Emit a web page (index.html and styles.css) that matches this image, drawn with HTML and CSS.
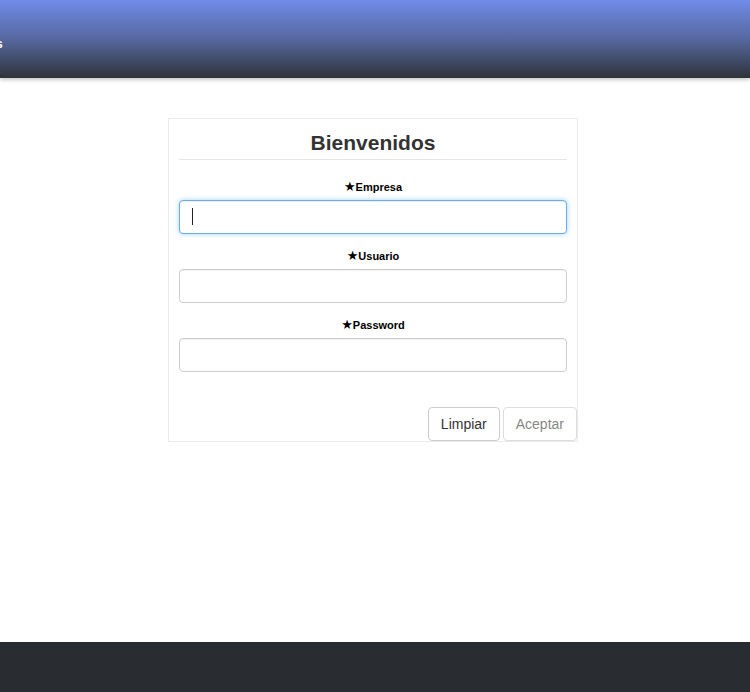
FILE: index.html
```html
<!DOCTYPE html>
<html lang="es">
<head>
<meta charset="utf-8">
<title>Bienvenidos</title>
<link rel="stylesheet" href="styles.css">
</head>
<body>
<header class="topbar">
  <span class="brand">s</span>
</header>
<main class="main">
  <form class="card">
    <h2 class="card-title">Bienvenidos</h2>
    <hr class="divider">
    <div class="field field-first">
      <label class="field-label"><span class="star">★</span>Empresa</label>
      <div class="input-wrap">
        <input class="field-input focused" type="text">
        <span class="caret"></span>
      </div>
    </div>
    <div class="field">
      <label class="field-label"><span class="star">★</span>Usuario</label>
      <input class="field-input" type="text">
    </div>
    <div class="field">
      <label class="field-label"><span class="star">★</span>Password</label>
      <input class="field-input" type="password">
    </div>
    <div class="actions">
      <button type="button" class="btn">Limpiar</button>
      <button type="button" class="btn btn-disabled">Aceptar</button>
    </div>
  </form>
</main>
<footer class="footer"></footer>
</body>
</html>
```
FILE: styles.css
```css
html, body {
  margin: 0;
  padding: 0;
}
body {
  font-family: "Liberation Sans", Arial, sans-serif;
  background: #fff;
  min-height: 100vh;
  display: flex;
  flex-direction: column;
}
.topbar {
  height: 78px;
  background: linear-gradient(to bottom, #6f8ce8 0%, #56689f 50%, #2f333a 100%);
  box-shadow: 0 2px 4px rgba(0, 0, 0, 0.22);
  display: flex;
  align-items: center;
  position: relative;
  z-index: 1;
}
.brand {
  color: #fff;
  font-weight: bold;
  font-size: 12px;
  margin-left: -4px;
  margin-top: 10px;
}
.main {
  flex: 1;
  padding-top: 40px;
}
.card {
  width: 410px;
  box-sizing: border-box;
  margin-left: calc(50% - 207px);
  border: 1px solid #ebebeb;
  padding: 10px 10px 0;
}
.card-title {
  margin: 2px 0 0;
  font-size: 21px;
  line-height: 24px;
  font-weight: bold;
  color: #333;
  text-align: center;
}
.divider {
  border: 0;
  border-top: 1px solid #e5e5e5;
  margin: 4px 0 0;
}
.field {
  display: flex;
  flex-direction: column;
  margin-top: 15px;
}
.field-first {
  margin-top: 20px;
}
.field-label {
  font-size: 11px;
  line-height: 14px;
  font-weight: bold;
  color: #000;
  text-align: center;
  margin-bottom: 6px;
}
.star {
  font-family: "DejaVu Sans", sans-serif;
  font-weight: normal;
  font-size: 13px;
  line-height: 14px;
}
.input-wrap {
  position: relative;
}
.field-input {
  display: block;
  width: 100%;
  height: 34px;
  box-sizing: border-box;
  border: 1px solid #ccc;
  border-radius: 4px;
  padding: 6px 12px;
  font-size: 14px;
  outline: none;
  box-shadow: inset 0 1px 1px rgba(0, 0, 0, 0.05);
  background: #fff;
}
.field-input.focused {
  border-color: #66afe9;
  box-shadow: inset 0 1px 1px rgba(0, 0, 0, 0.075), 0 0 5px rgba(102, 175, 233, 0.6);
}
.caret {
  position: absolute;
  left: 13px;
  top: 8px;
  width: 1px;
  height: 17px;
  background: #222;
}
.actions {
  display: flex;
  justify-content: flex-end;
  gap: 3px;
  margin: 35px -10px 0 0;
}
.btn {
  font-family: "Liberation Sans", Arial, sans-serif;
  font-size: 14px;
  line-height: 20px;
  padding: 6px 12px;
  height: 34px;
  border: 1px solid #ccc;
  border-radius: 4px;
  background: #fff;
  color: #333;
}
.btn-disabled {
  color: #888;
  border-color: #ddd;
}
.footer {
  height: 50px;
  background: #292d31;
}
```
